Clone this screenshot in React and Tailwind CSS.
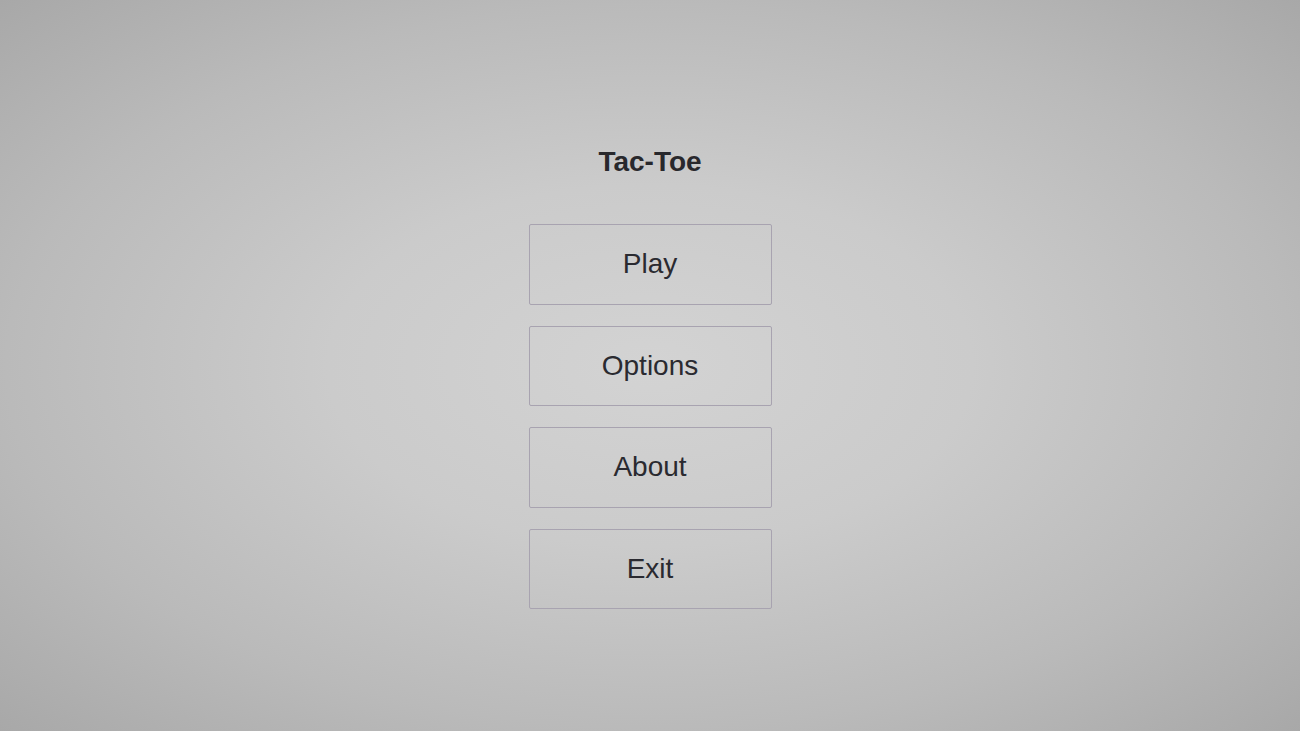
export default function App() {
  const items = ["Play", "Options", "About", "Exit"];
  return (
    <div
      className="w-full h-[731px] flex flex-col items-center bg-[radial-gradient(ellipse_at_center,#d3d3d3_0%,#cbcbcb_35%,#bababa_70%,#a8a8a8_100%)]"
      style={{ fontFamily: '"Liberation Sans", Arial, sans-serif' }}
    >
      <h1 className="mt-[145px] h-[34px] leading-[34px] text-[28px] font-bold text-[#28282c]">
        Tac-Toe
      </h1>
      <div className="mt-[45px] flex flex-col gap-[21px]">
        {items.map((t) => (
          <button
            key={t}
            className="w-[243px] h-[80.5px] rounded-[2px] border border-[#a8a3b0] bg-transparent flex items-center justify-center text-[28px] text-[#2a2a30]"
          >
            {t}
          </button>
        ))}
      </div>
    </div>
  );
}
